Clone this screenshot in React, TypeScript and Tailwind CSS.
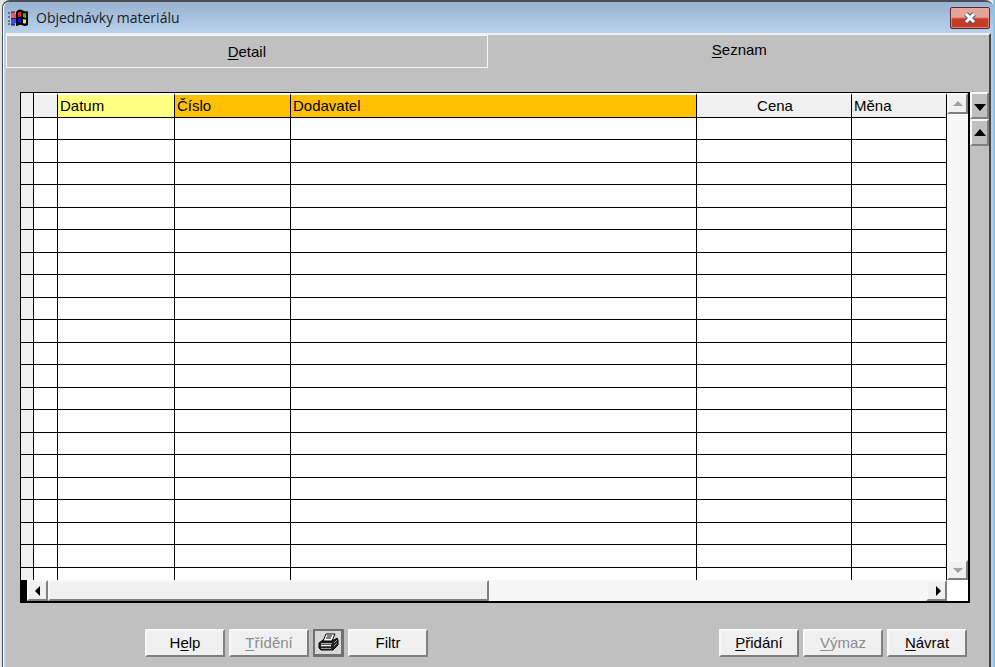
import type { ReactNode } from "react";

const columns = [
  { title: "", width: "w-[24px]", head: "bg-[#f0f0f0]" },
  { title: "Datum", width: "w-[117px]", head: "bg-[#ffff80] text-left" },
  { title: "Číslo", width: "w-[116px]", head: "bg-[#ffc000] text-left" },
  { title: "Dodavatel", width: "", head: "bg-[#ffc000] text-left" },
  { title: "Cena", width: "w-[155px]", head: "bg-[#f0f0f0] text-center" },
  { title: "Měna", width: "w-[95px]", head: "bg-[#f0f0f0] text-left" },
];

const rows = Array.from({ length: 20 }, (_, i) => i);

const raised =
  "border-2 border-t-[#f8f8f8] border-l-[#f8f8f8] border-r-[#808080] border-b-[#808080]";
const track = "bg-[#f7f7f7]";

interface PushButtonProps {
  hotkey?: string;
  before?: string;
  after: string;
  disabled?: boolean;
}

function PushButton({ hotkey, before, after, disabled }: PushButtonProps) {
  return (
    <button
      type="button"
      disabled={disabled}
      className={`h-[28px] w-[80px] bg-[#f0f0f0] ${raised} text-center leading-6 disabled:text-[#8c8c8c]`}
    >
      {before}
      {hotkey && <span className="underline underline-offset-2">{hotkey}</span>}
      {after}
    </button>
  );
}

interface ArrowButtonProps {
  label: string;
  points: string;
  className: string;
  disabled?: boolean;
}

function ArrowButton({ label, points, className, disabled }: ArrowButtonProps) {
  return (
    <button
      type="button"
      aria-label={label}
      disabled={disabled}
      className={`flex shrink-0 items-center justify-center ${raised} ${className}`}
    >
      <svg width="14" height="14" viewBox="0 0 14 14" fill="currentColor" className="shrink-0">
        <polygon points={points} />
      </svg>
    </button>
  );
}

function WindowsLogo() {
  return (
    <svg width="20" height="18" viewBox="0 0 20 18" className="shrink-0">
      <path d="M8 3 L10 1 Q12 0 14 1 Q17 3 19 2 L20 3 V16 Q17 18 14 16 Q12 15 9 17 H8 Z" fill="#000" />
      <path d="M10 4 Q11 2 13 3 V8 Q12 7 10 8 Z" fill="#f22" />
      <path d="M15 4 Q17 5 18 4 V9 Q17 9 15 8 Z" fill="#1c2" />
      <path d="M10 10 Q12 9 13 10 V14 Q12 13 10 14 Z" fill="#11f" />
      <path d="M15 10 Q17 11 18 10 V14 Q17 15 15 14 Z" fill="#fe1" />
      <path d="M3 4h4M3 6h5M3 8h5" stroke="#f33" strokeWidth="1.4" />
      <path d="M3 11h5M3 13h5M3 15h4" stroke="#22e" strokeWidth="1.4" />
      <path d="M0 4h2M0 8h2M0 12h2M0 15h2M3 3h4M3 9.5h5M3 16h4" stroke="#222" />
    </svg>
  );
}

function PrinterIcon() {
  return (
    <svg width="21" height="19" viewBox="0 0 21 19" className="shrink-0" stroke="#000" strokeLinejoin="round">
      <path d="M1 10 L5 7 H16 L19 5 L20 7 V12 L15 17 H3 L1 15 Z" fill="#222" />
      <path d="M5 8 L8 1 H17 L14 8 Z" fill="#fff" />
      <path d="M9 3h5M8 5h5" />
      <path d="M3 10.5h11" stroke="#aaa" />
      <path d="M3 12.5h10" stroke="#fff" strokeWidth="1.5" />
      <path d="M3 15.5h10M16 13l3-3M16 10l3-3" stroke="#999" />
    </svg>
  );
}

interface TabProps {
  selected?: boolean;
  className: string;
  children: ReactNode;
}

function Tab({ selected, className, children }: TabProps) {
  return (
    <button type="button" role="tab" aria-selected={!!selected} className={className}>
      {children}
    </button>
  );
}

export default function App() {
  return (
    <div className="flex min-h-screen border-r-2 border-[#5fd8f4] bg-[#e4e4e4] pl-[2px] font-['Liberation_Sans',Arial,sans-serif] text-[15px] text-black">
      <div className="flex flex-1 flex-col rounded-t-lg border-t-2 border-l border-[#4b4f55] bg-[#b9d1ea]">
        <header className="flex h-[31px] items-center gap-1 rounded-t-md border-l border-white bg-linear-to-b from-[#98b2d0] to-[#b9d1ea] pr-[3px] pl-1">
          <WindowsLogo />
          <h1 className="flex-1 pl-1 font-['Open_Sans',sans-serif] text-sm text-[#1c1c1c]">
            Objednávky materiálu
          </h1>
          <button
            type="button"
            aria-label="Zavřít"
            className="flex h-[22px] w-[40px] items-center justify-center rounded-xs border border-[#5c2430] bg-linear-to-b from-[#e5a498] from-45% to-[#c33c27] to-55% inset-ring inset-ring-[#e8b0a6]/60"
          >
            <svg width="14" height="12" viewBox="0 0 14 12">
              <path d="M3 2l8 8M11 2l-8 8" stroke="#555766" strokeWidth="5" />
              <path d="M3 2l8 8M11 2l-8 8" stroke="#fff" strokeWidth="3" />
            </svg>
          </button>
        </header>

        <div className="flex flex-1 border-l border-white pr-[2px] pl-[2px]">
          <main className="flex flex-1 flex-col border-t-2 border-r-2 border-t-[#f0f0f0] border-r-[#444] bg-[#c0c0c0]">
            <div role="tablist" className="flex h-[33px]">
              <Tab className="w-[49%] border border-[#f8f8f8] pt-0.5">
                <span className="underline underline-offset-2">D</span>etail
              </Tab>
              <Tab selected className="flex-1 pb-0.5 pl-0.5">
                <span className="underline underline-offset-2">S</span>eznam
              </Tab>
            </div>

            <div className="mt-6 ml-3.5 flex items-start">
              <div className="min-w-0 flex-1 border border-r-2 border-b-2 border-black bg-white">
                <div className="flex">
                  <table className="flex-1 table-fixed border-separate border-spacing-0">
                    <thead>
                      <tr className="h-[25px]">
                        <th className="w-[13px] border-r border-b border-black bg-[#f0f0f0] p-0" />
                        {columns.map((column, i) => (
                          <th
                            key={i}
                            className={`border-t-2 border-r border-b border-t-white border-r-black border-b-black p-0 pl-0.5 leading-5 font-normal ${column.width} ${column.head}`}
                          >
                            {column.title}
                          </th>
                        ))}
                      </tr>
                    </thead>
                    <tbody>
                      {rows.map((row) => (
                        <tr key={row} className="h-[22px] even:h-[23px]">
                          <td className="border-r border-b border-black bg-[#f0f0f0] p-0" />
                          {columns.map((_, i) => (
                            <td key={i} className="border-r border-b border-black p-0" />
                          ))}
                        </tr>
                      ))}
                      <tr className="h-[12px]">
                        <td className="border-r border-black bg-[#f0f0f0] p-0" />
                        {columns.map((_, i) => (
                          <td key={i} className="border-r border-black p-0" />
                        ))}
                      </tr>
                    </tbody>
                  </table>
                  <div className={`flex w-[21px] flex-col justify-between text-[#a0a0a0] ${track}`}>
                    <ArrowButton label="Nahoru" points="2,9 7,4 12,9" className="h-[21px] bg-[#f0f0f0]" disabled />
                    <ArrowButton label="Dolů" points="2,5 12,5 7,10" className="h-[20px] bg-[#f0f0f0]" disabled />
                  </div>
                </div>
                <div className="flex h-[21px]">
                  <div className="w-[6px] bg-black" />
                  <div className={`flex flex-1 ${track}`}>
                    <ArrowButton label="Vlevo" points="9,2 9,12 4,7" className="w-[21px] bg-[#f0f0f0]" />
                    <div className={`w-[441px] bg-[#f0f0f0] ${raised}`} />
                    <div className="flex-1" />
                    <ArrowButton label="Vpravo" points="6,2 6,12 11,7" className="w-[21px] bg-[#f0f0f0]" />
                  </div>
                  <div className="w-[21px]" />
                </div>
              </div>
              <div className="flex w-[19px] flex-col">
                <ArrowButton label="Další" points="1,5 13,5 7,12" className="h-[27px] bg-[#c0c0c0]" />
                <ArrowButton label="Předchozí" points="1,10 13,10 7,3" className="h-[27px] bg-[#c0c0c0]" />
              </div>
            </div>

            <footer className="mt-[26px] mr-[22px] ml-[139px] flex items-center gap-1">
              <PushButton before="H" hotkey="e" after="lp" />
              <PushButton hotkey="T" after="řídění" disabled />
              <button
                type="button"
                aria-label="Tisk"
                className="flex h-[28px] w-[31px] items-center justify-center border-2 border-r-3 border-b-3 border-[#707070] bg-[#d8d8d8]"
              >
                <PrinterIcon />
              </button>
              <PushButton after="Filtr" />
              <div className="flex-1" />
              <PushButton hotkey="P" after="řidání" />
              <PushButton hotkey="V" after="ýmaz" disabled />
              <PushButton hotkey="N" after="ávrat" />
            </footer>
          </main>
        </div>
      </div>
    </div>
  );
}
